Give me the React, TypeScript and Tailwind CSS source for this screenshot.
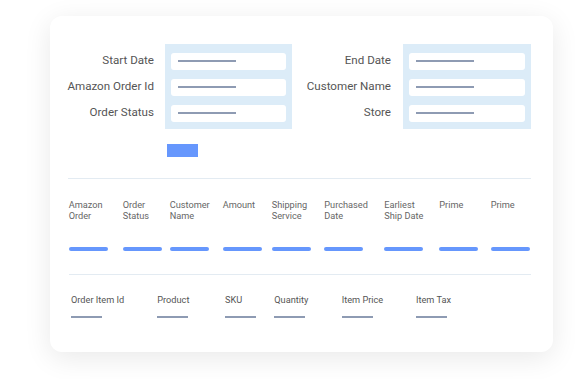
import React from "react";

const headers: { label: string[]; w: string }[] = [
  { label: ["Amazon", "Order"], w: "w-[54px]" },
  { label: ["Order", "Status"], w: "w-[47px]" },
  { label: ["Customer", "Name"], w: "w-[53px]" },
  { label: ["Amount"], w: "w-[49px]" },
  { label: ["Shipping", "Service"], w: "w-[52.6px]" },
  { label: ["Purchased", "Date"], w: "w-[60px]" },
  { label: ["Earliest", "Ship Date"], w: "w-[55px]" },
  { label: ["Prime"], w: "w-[51.4px]" },
  { label: ["Prime"], w: "w-[40px]" },
];

const items: { label: string; w: string }[] = [
  { label: "Order Item Id", w: "w-[86.3px]" },
  { label: "Product", w: "w-[67.7px]" },
  { label: "SKU", w: "w-[49.3px]" },
  { label: "Quantity", w: "w-[67.4px]" },
  { label: "Item Price", w: "w-[74.3px]" },
  { label: "Item Tax", w: "w-[60px]" },
];

function FieldGroup({ labels, labelW, boxW, gap }: { labels: string[]; labelW: string; boxW: string; gap: string }) {
  return (
    <div className="flex">
      <div className={`${labelW} flex flex-col items-end pt-[7.5px] gap-[9px]`}>
        {labels.map((l) => (
          <div key={l} className="h-[17px] leading-[16px] text-[11.6px] text-[#555555] whitespace-nowrap">
            {l}
          </div>
        ))}
      </div>
      <div className={`${gap} ${boxW} h-[85px] bg-[#dcecf8] px-[6px] pt-[8.7px] flex flex-col gap-[9px]`}>
        {labels.map((l) => (
          <div key={l} className="h-[17px] bg-white rounded-[3px] flex items-center pl-[6.7px]">
            <div className="w-[58px] h-[2px] bg-[#8e9bb3]" />
          </div>
        ))}
      </div>
    </div>
  );
}

export default function App() {
  return (
    <div className="w-[575px] h-[379px] bg-white pt-[16px] pl-[50px]" style={{ fontFamily: "Roboto, 'Liberation Sans', sans-serif" }}>
      <div className="w-[503px] h-[336px] rounded-[12px] bg-white shadow-[0_6px_28px_rgba(0,0,0,0.09)] pl-[18px] pr-[22px] pt-[28px]">
        <div className="flex">
          <FieldGroup labels={["Start Date", "Amazon Order Id", "Order Status"]} labelW="w-[86px]" boxW="w-[127px]" gap="ml-[11px]" />
          <div className="ml-[15px]">
            <FieldGroup labels={["End Date", "Customer Name", "Store"]} labelW="w-[84px]" boxW="w-[128px]" gap="ml-[12px]" />
          </div>
        </div>
        <div className="mt-[15px] ml-[98.7px] w-[31px] h-[13px] bg-[#6697fd]" />
        <div className="mt-[20.5px] h-[1.5px] bg-[#e3ebf2]" />
        <div className="flex pl-[0.7px] mt-[19.5px]">
          {headers.map((h, i) => (
            <div key={i} className={`${h.w} shrink-0`}>
              <div className="h-[48px] text-[9.2px] leading-[11px] text-[#666666] whitespace-nowrap">
                {h.label.map((t) => (
                  <div key={t}>{t}</div>
                ))}
              </div>
              <div className="w-[39px] h-[4px] rounded-full bg-[#6697fd]" />
            </div>
          ))}
        </div>
        <div className="mt-[23px] h-[1.5px] bg-[#e3ebf2] ml-[1px]" />
        <div className="flex pl-[3px] mt-[19px]">
          {items.map((it) => (
            <div key={it.label} className={`${it.w} shrink-0`}>
              <div className="h-[11px] leading-[11px] text-[9.2px] text-[#555555] whitespace-nowrap">{it.label}</div>
              <div className="mt-[11px] w-[31px] h-[2px] bg-[#8e9bb3]" />
            </div>
          ))}
        </div>
      </div>
    </div>
  );
}
